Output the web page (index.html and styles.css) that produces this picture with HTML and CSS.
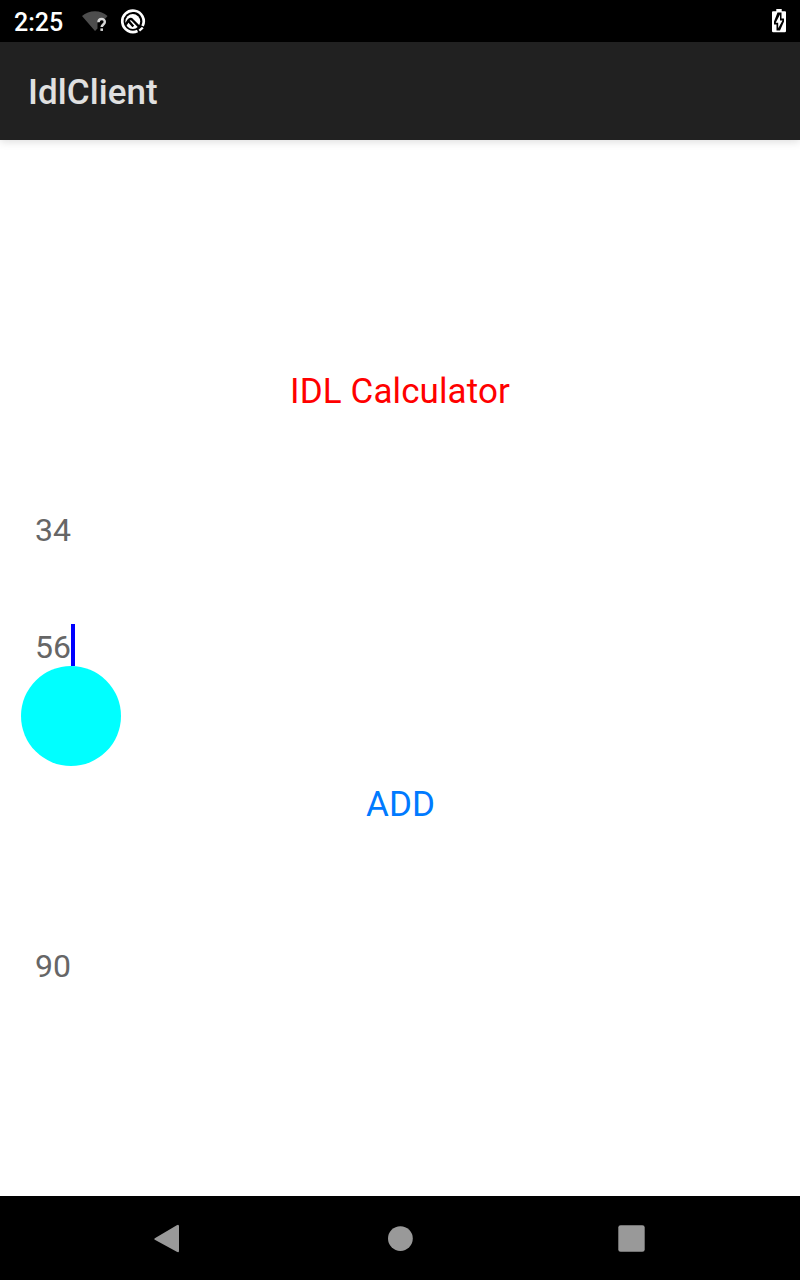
FILE: index.html
```html
<!DOCTYPE html>
<html lang="en">
<head>
<meta charset="utf-8">
<title>IdlClient</title>
<link rel="stylesheet" href="styles.css">
</head>
<body>
<div class="status">
  <span class="clock">2:25</span>
  <svg class="wifi" width="26" height="26" viewBox="0 0 26 26">
    <path fill="#4d4d4d" d="M0 7C7 .5 19 .5 25.500 7L23.500 9.500h-4L15.500 13.500v6L13 22z"/>
    <path fill="none" stroke="#d8d8d8" stroke-width="2.500" d="M16.500 13.200c0-4.300 6.300-4.300 6.300-.3 0 2.400-3.100 2.700-3.100 5.200"/>
    <path fill="#d8d8d8" d="M18.400 19.400h2.600v2.500h-2.600z"/>
  </svg>
  <svg class="app-mark" width="26" height="26" viewBox="0 0 26 26">
    <path fill="none" stroke="#fff" stroke-width="2.700" d="M17.500 22A10.700 10.700 0 1 1 22.600 17"/>
    <circle cx="12.800" cy="12.500" r="7.400" fill="#fff"/>
    <path fill="none" stroke="#000" stroke-width="2.400" d="M5.800 15.700L8.500 11.300Q10.500 8.800 12.500 11L20.500 19.200M9 12.500l4.300 5"/>
    <path fill="none" stroke="#fff" stroke-width="2.300" d="M19.300 21.700l3.500-3"/>
  </svg>
  <svg class="battery" width="14" height="24" viewBox="0 0 14 24">
    <path fill="#fff" d="M4.300 0h5.400v2.300H13q1 0 1 1V22q0 1.200-1.200 1.200H1.200Q0 23.200 0 22V3.300q0-1 1-1h3.300z"/>
    <path d="M5.500 3.500h4V9.500h2.500v3L8 21.500H4.500V15.500H2v-3z"/>
    <path fill="#fff" d="M8 5.500v6h2.500L6.200 19.200v-5.500H3.700z"/>
  </svg>
</div>
<header class="bar">IdlClient</header>
<main class="content">
  <h1 class="title">IDL Calculator</h1>
  <div class="field first">34</div>
  <div class="field second">56<span class="caret"></span><span class="handle"></span></div>
  <button class="add">ADD</button>
  <div class="field result">90</div>
</main>
<nav class="nav">
  <svg class="back" width="27" height="30" viewBox="0 0 27 30"><path fill="#999" d="M.8 14.200L22.800 1.200Q25 0 25 2.300V26.700Q25 29 22.800 27.800L.8 15.800Q-.2 15 .8 14.200z"/></svg>
  <svg class="home" width="26" height="26" viewBox="0 0 26 26"><circle cx="13.400" cy="12.600" r="12.400" fill="#999"/></svg>
  <svg class="recent" width="27" height="27" viewBox="0 0 27 27"><rect x=".3" y=".3" width="26.400" height="26.400" rx="2.300" fill="#999"/></svg>
</nav>
</body>
</html>
```
FILE: styles.css
```css
body {
  margin: 0;
  width: 800px;
  height: 1280px;
  display: flex;
  flex-direction: column;
  background: #fff;
  font-family: Roboto, sans-serif;
  overflow: hidden;
}
.status {
  display: flex;
  align-items: flex-start;
  height: 42px;
  padding: 0 14px;
  background: #000;
  color: #fff;
}
.clock {
  width: 68px;
  font-size: 25px;
  font-weight: 500;
  line-height: 45px;
}
.wifi { margin-top: 9px; }
.app-mark { margin: 9px 0 0 12px; }
.battery { margin: 9px 0 0 auto; }
.bar {
  height: 98px;
  padding-left: 28px;
  box-sizing: border-box;
  background: #212121;
  color: #e0e0e0;
  font-size: 35px;
  font-weight: 500;
  line-height: 102px;
  letter-spacing: 0.08px;
  box-shadow: 0 2px 8px rgba(0, 0, 0, 0.13);
}
.content {
  flex: 1;
  display: flex;
  flex-direction: column;
}
.title {
  margin: 231px 0 0;
  font-size: 35px;
  font-weight: 400;
  line-height: 41px;
  letter-spacing: 0.1px;
  text-align: center;
  color: #f00;
}
.field {
  position: relative;
  height: 42px;
  padding-left: 35px;
  font-size: 32px;
  line-height: 40px;
  color: #666;
}
.first { margin-top: 98px; }
.second { margin-top: 75px; }
.caret {
  position: absolute;
  left: 71px;
  top: -3px;
  width: 4px;
  height: 42px;
  background: #00f;
}
.handle {
  position: absolute;
  left: 21px;
  top: 39px;
  width: 100px;
  height: 100px;
  border-radius: 50%;
  background: #0ff;
}
.add {
  align-self: center;
  margin-top: 115px;
  padding: 0 0 0 1px;
  border: 0;
  background: none;
  color: #007aff;
  font: 35px/41px Roboto, sans-serif;
}
.result { margin-top: 121px; }
.nav {
  display: flex;
  align-items: center;
  height: 84px;
  padding-left: 154px;
  background: #000;
}
.back { margin-top: 1px; }
.home { margin: 1px 0 0 206.400px; }
.recent { margin-left: 204.600px; }
```
